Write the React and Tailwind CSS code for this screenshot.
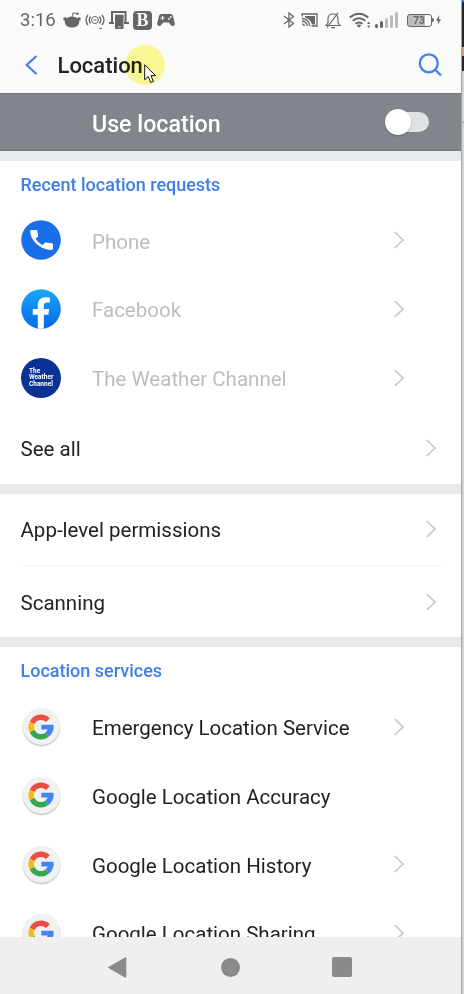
import React from 'react';
import clsx from 'clsx';

const recentRequests = [
  { label: 'Phone', icon: 'phone' },
  { label: 'Facebook', icon: 'facebook' },
  { label: 'The Weather Channel', icon: 'weather' },
];

const services = [
  { label: 'Emergency Location Service', arrow: true },
  { label: 'Google Location Accuracy', arrow: false },
  { label: 'Google Location History', arrow: true },
  { label: 'Google Location Sharing', arrow: true },
];

const Chevron = () => (
  <svg width="10" height="18" viewBox="0 0 10 18" fill="none" stroke="#c6c6c6" strokeWidth="1.7" className="shrink-0">
    <path d="M.8 1 9 9 .8 17" />
  </svg>
);

const PhoneIcon = () => (
  <svg width="40" height="40" viewBox="0 0 40 40">
    <circle cx="20" cy="20" r="19.8" fill="#1a6fe8" />
    <path
      d="M10.600 10h4.600c.6 0 1 .4 1.100 1l.8 4.600c.1.400 0 .8-.3 1.100l-2.300 2.100a18 18 0 0 0 6.800 6.300l2.400-2.200c.3-.3.700-.4 1.100-.3l6.200.7c.6.1 1 .6 1 1.200v4.100c0 .8-.6 1.400-1.400 1.400C19.500 30 9.300 20.500 9.300 11.300c0-.8.5-1.300 1.300-1.300z"
      fill="#fff"
    />
  </svg>
);

const FacebookIcon = () => (
  <svg width="40" height="40" viewBox="0 0 40 40">
    <defs>
      <linearGradient id="fb" x1="0" y1="0" x2="0" y2="1">
        <stop offset="0" stopColor="#19a7fb" />
        <stop offset="1" stopColor="#0668e6" />
      </linearGradient>
    </defs>
    <circle cx="20" cy="20" r="19.8" fill="url(#fb)" />
    <path
      d="M16.800 39.500V25.800h-5v-5.700h5v-3.900c0-5.300 3-8 7.700-8 2 0 4.300.3 4.300.3v5h-2.700c-2.500 0-3.300 1.400-3.300 3v3.600h5.400l-.9 5.700h-4.500v13.700a20 20 0 0 1-6 0z"
      fill="#fff"
    />
  </svg>
);

const WeatherIcon = () => (
  <div className="flex size-10 flex-col justify-center rounded-full bg-[#0a3296] pl-[8px] text-[6.5px] leading-[6.5px] font-bold text-white">
    <span>The</span>
    <span>Weather</span>
    <span>Channel</span>
  </div>
);

const GoogleIcon = () => (
  <div className="flex size-10 items-center justify-center">
    <div className="flex size-[37px] items-center justify-center rounded-full bg-[#f1f1f1] shadow-[0_1px_1.5px_rgba(0,0,0,0.3)]">
      <svg width="26" height="26" viewBox="0 0 26 26" fill="none" strokeWidth="5.4">
        <path d="M4.100 8.900A9.800 9.800 0 0 1 19.900 6.100" stroke="#e94f43" />
        <path d="M4.100 17.100A9.800 9.800 0 0 1 4.100 8.900" stroke="#f8bb15" />
        <path d="M19.300 20.500A9.800 9.800 0 0 1 4.100 17.100" stroke="#34a853" />
        <path d="M22.800 13A9.800 9.800 0 0 1 19.300 20.500" stroke="#4285f4" />
        <path d="M13.300 10.800h12.100q.3 2.200-.1 4.600h-12z" fill="#4285f4" />
      </svg>
    </div>
  </div>
);

const appIcons = {
  phone: PhoneIcon,
  facebook: FacebookIcon,
  weather: WeatherIcon,
};

const AppRow = ({ icon: Icon, label, arrow = true, disabled }) => (
  <div className="flex h-[68.7px] shrink-0 items-center pr-[57px] pl-[21px]">
    <Icon />
    <span className={clsx('ml-[31px] flex-1 pt-[3.5px] text-[20.5px] whitespace-nowrap', disabled ? 'text-[#bdbdbd]' : 'text-[#222]')}>
      {label}
    </span>
    {arrow && <Chevron />}
  </div>
);

const LinkRow = ({ label }) => (
  <div className="flex h-[71.8px] items-center justify-between pr-[5px]">
    <span className="pt-[3px] text-[20.5px] text-[#222]">{label}</span>
    <Chevron />
  </div>
);

const SectionTitle = ({ children }) => (
  <h2 className="flex h-[45px] shrink-0 items-center pt-[2px] pl-[20.5px] text-[18px] font-medium text-[#3f7ee8]">{children}</h2>
);

const Band = () => <div className="h-[10px] shrink-0 bg-[#e9e9e9]" />;

const StatusBar = () => (
  <div className="flex h-10 shrink-0 items-center justify-between pr-[20.5px] pl-[20px] text-[#666]">
    <div className="flex items-center">
      <span className="w-[43px] pt-[2px] text-[18.5px]">3:16</span>
      {/* Reddit */}
      <svg width="18" height="18" viewBox="0 0 18 18" fill="currentColor">
        <ellipse cx="9" cy="11" rx="7.3" ry="5.6" />
        <circle cx="2" cy="8" r="1.8" />
        <circle cx="16" cy="8" r="1.8" />
        <path d="M9 6 10 2l4 .5" fill="none" stroke="currentColor" />
        <circle cx="14.5" cy="2.7" r="1.3" />
      </svg>
      {/* Hotspot */}
      <svg width="20" height="18" viewBox="0 0 20 18" fill="none" stroke="currentColor" strokeWidth="1.3" className="ml-[4px]">
        <path d="M3 4Q-1 9 3 14M5.500 5.500q-2.500 3.500 0 7M17 4q4 5 0 10M14.500 5.500q2.500 3.500 0 7" />
        <circle cx="10" cy="9" r="3.5" strokeWidth="1" />
        <path d="M8.500 9h3M14 17.300h3" strokeWidth="1" />
      </svg>
      {/* Screen share */}
      <svg width="20" height="20" viewBox="0 0 20 20" className="ml-[4px]">
        <path d="M3 12V2h13.500v10M0 13h5M15 13h5" fill="none" stroke="currentColor" strokeWidth="2" />
        <rect x="6" y="4.500" width="8.500" height="14.500" rx="1" fill="currentColor" />
        <path d="M5.500 4h9.500M9 17h3" stroke="#fafafa" strokeWidth=".8" />
      </svg>
      <span className="ml-[4px] flex size-[19px] items-center justify-center rounded-[4px] bg-[#666] font-['Liberation_Serif'] text-[18px] font-bold text-[#fafafa]">B</span>
      {/* Game controller */}
      <svg width="18" height="14" viewBox="0 0 18 14" fill="currentColor" className="ml-[5px]">
        <path d="M4.500 1h9c1.500 0 2.300 1 2.600 2.200l1.600 7c.5 2.500-1.900 3.800-3.400 2.200L11.700 9.500H6.300l-2.600 2.900C2.200 14-.2 12.700.3 10.200l1.600-7C2.200 2 3 1 4.500 1z" />
        <path d="M5.500 3v4M3.500 5h4" stroke="#fafafa" strokeWidth="1.2" />
        <circle cx="12" cy="6" r=".9" fill="#fafafa" />
        <circle cx="13.8" cy="4" r=".9" fill="#fafafa" />
      </svg>
    </div>

    <div className="flex items-center">
      {/* Bluetooth */}
      <svg width="12" height="16" viewBox="0 0 12 16" fill="none" stroke="currentColor" strokeWidth="1.3">
        <path d="M1 4l9.500 7.500L6 15V1l4.500 3.500L1 12" />
      </svg>
      {/* Cast */}
      <svg width="17" height="14" viewBox="0 0 17 14" fill="none" stroke="currentColor" strokeWidth="1.3" className="ml-[6px]">
        <path d="M1 3.500V1h15v12h-5.500" />
        <path d="M4 3h10v8.500h-3Q9.500 6 4 4.500z" fill="currentColor" stroke="none" />
        <path d="M1 5.500Q8 6 8.800 13M1 8q4.500.5 5.300 5M1 10.800q2 .2 2.500 2.200" />
      </svg>
      {/* Muted bell */}
      <svg width="16" height="17" viewBox="0 0 16 17" fill="none" stroke="currentColor" strokeWidth="1.2" className="ml-[7px]">
        <path d="M1 13.500h14l-2-2.500V7c0-3-2-5-5-5S3 4 3 7v4zM6 15.700h4M2 15.500 13 .8" />
      </svg>
      {/* Wifi */}
      <svg width="22" height="17" viewBox="0 0 22 17" fill="none" stroke="currentColor" strokeWidth="2" className="ml-[8px]">
        <path d="M.8 5.500q9.200-7.500 18.400 0M3.700 8.700q6.300-5 12.600 0M6.500 11.800q3.500-2.700 7 0" />
        <path d="m7.600 13.300 2.400 2.500 2.400-2.500q-2.400-1.500-4.800 0z" fill="currentColor" stroke="none" />
        <path d="m18 12 1.700-2.200 1.700 2.200zm0 1.800 1.700 2.200 1.700-2.200z" fill="currentColor" stroke="none" />
      </svg>
      {/* Signal */}
      <div className="ml-[4px] flex h-4 items-end gap-[2px]">
        <span className="h-[4px] w-[3px] rounded-full bg-[#666]" />
        <span className="h-[7px] w-[3px] rounded-full bg-[#666]" />
        <span className="h-[10px] w-[3px] rounded-full bg-[#bbb]" />
        <span className="h-[13px] w-[3px] rounded-full bg-[#bbb]" />
        <span className="h-[16px] w-[3px] rounded-full bg-[#bbb]" />
      </div>
      {/* Battery */}
      <div className="ml-[9px] flex h-[13px] w-[25px] items-center justify-center rounded-[3px] border border-[#666] bg-linear-to-r from-[#bdbdbd] from-75% to-[#fafafa] to-75% text-[10px] font-bold">
        73
      </div>
      <span className="h-[4px] w-[2px] rounded-r bg-[#666]" />
      <svg width="5" height="10" viewBox="0 0 6 12" fill="currentColor" className="ml-[2px]">
        <path d="M4 0 0 6.800h2.500L2 12l4-7H3.500z" />
      </svg>
    </div>
  </div>
);

const Header = () => (
  <header className="relative flex h-[53px] shrink-0 items-center pr-[19px] pb-[3px] pl-[25px]">
    <svg width="13" height="20" viewBox="0 0 13 20" fill="none" stroke="#3f80ee" strokeWidth="2.2">
      <path d="M11.500 1 1.700 10l9.800 9" />
    </svg>
    <h1 className="ml-[19.5px] flex-1 pt-px text-[22px] font-medium text-[#222]">Location</h1>
    <svg width="24" height="24" viewBox="0 0 24 24" fill="none" stroke="#3f80ee" strokeWidth="2.3">
      <circle cx="10.8" cy="10.3" r="9" />
      <path d="m17 16.500 6 6" />
    </svg>
    {/* Pointer with its click highlight */}
    <div className="absolute top-[4.5px] left-[125px] size-10 rounded-full bg-[#fdfb98] mix-blend-multiply" />
    <svg width="14" height="20" viewBox="0 0 14 20" className="absolute top-[24px] left-[144px]">
      <path d="M.7.800v15l3.500-3.300 2.500 6 2.700-1.200-2.500-5.600h4.700z" fill="#fff" stroke="#111" />
    </svg>
  </header>
);

const NavBar = () => (
  <nav className="flex h-[57px] shrink-0 items-center bg-[#efefef] pt-[3px] pl-[108px]">
    <svg width="19" height="21" viewBox="0 0 19 21" fill="#8a8a8a">
      <path d="M.8 9.700 17 .600q1.300-.7 1.300.6v18.600q0 1.300-1.300.6L.8 11.300q-1.300-.8 0-1.600z" />
    </svg>
    <div className="ml-[94px] size-[19px] rounded-full bg-[#8a8a8a]" />
    <div className="ml-[91.5px] size-5 rounded-[2px] bg-[#8a8a8a]" />
  </nav>
);

const App = () => {
  return (
    <div className="flex h-[994px] w-[464px] overflow-hidden bg-white font-[Roboto,sans-serif]">
      <main className="flex w-[461px] flex-col">
        <div className="flex shrink-0 flex-col bg-[#fafafa]">
          <StatusBar />
          <Header />
        </div>

        <div className="flex h-[58px] shrink-0 items-center justify-between border-y border-[#75797c] bg-[#80868b] pr-[32px] pl-[92px]">
          <span className="pt-[5px] text-[23.2px] font-medium text-white">Use location</span>
          <div className="flex h-[20px] w-[42px] items-center rounded-full bg-[#dfe2e3]">
            <span className="-ml-[2px] size-[26px] shrink-0 rounded-full bg-white shadow-[0_1px_2px_rgba(0,0,0,0.25)]" />
          </div>
        </div>
        <Band />

        <SectionTitle>Recent location requests</SectionTitle>
        {recentRequests.map((item) => (
          <AppRow key={item.label} icon={appIcons[item.icon]} label={item.label} disabled />
        ))}
        <div className="px-[20.5px]">
          <LinkRow label="See all" />
        </div>
        <Band />

        <div className="divide-y divide-[#f1f1f1] px-[20.5px]">
          <LinkRow label="App-level permissions" />
          <LinkRow label="Scanning" />
        </div>
        <Band />

        <div className="flex min-h-0 flex-1 flex-col overflow-hidden">
          <SectionTitle>Location services</SectionTitle>
          {services.map((item) => (
            <AppRow key={item.label} icon={GoogleIcon} label={item.label} arrow={item.arrow} />
          ))}
        </div>
        <NavBar />
      </main>

      {/* Sliver of the desktop behind the phone window */}
      <aside className="flex w-[3px] flex-col border-l border-[#a3a3a3] bg-[#d3d3d3]">
        <div className="h-[2px] bg-[#3e7fc4]" />
        <div className="h-[45px] bg-[#26282b]" />
        <div className="h-[9px] bg-[#c9a27a]" />
        <div className="h-[15px] bg-[#26282b]" />
        <div className="mt-[51px] h-px bg-[#a3a3a3]" />
      </aside>
    </div>
  );
};

export default App;
